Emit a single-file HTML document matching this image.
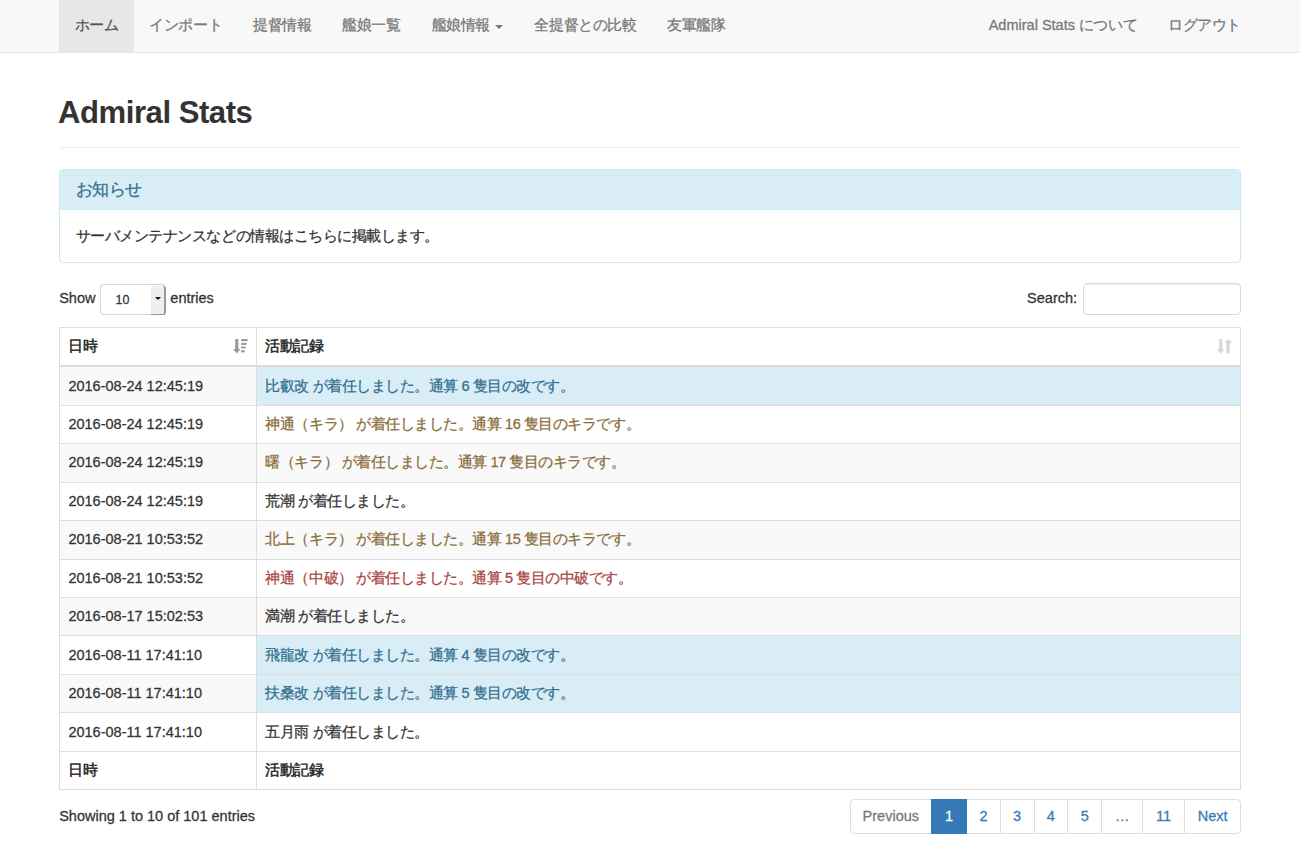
<!DOCTYPE html>
<html><head><meta charset="utf-8">
<style>
html{zoom:1.0366}
*{box-sizing:border-box}
body{-webkit-text-stroke:0.25px;margin:0;font-family:"Liberation Sans",sans-serif;font-size:14px;line-height:20px;color:#333;background:#fff}
.navbar{height:51px;background:#f8f8f8;border-bottom:1px solid #e7e7e7;position:relative}
.container{width:1170px;margin:0 auto;padding:0 15px;position:relative}
.nav{list-style:none;margin:0;padding:0;position:absolute;top:0}
.nav li{float:left}
.nav a{letter-spacing:-0.45px;display:block;padding:14px 15px 16px;line-height:20px;color:#777;text-decoration:none}
.nav li.active a{background:#e7e7e7;color:#555}
.nav.left{left:15px}
.nav.right{right:0}
.caret{position:relative;top:1.2px;display:inline-block;width:0;height:0;margin-left:2px;vertical-align:middle;border-top:4px solid;border-right:4px solid transparent;border-left:4px solid transparent}
.page-header{margin:41.5px 0 20px;padding-bottom:9px;border-bottom:1px solid #eee}
h1{-webkit-text-stroke:0;margin:0 0 7.5px -1px;font-size:30px;line-height:33px;font-weight:bold;letter-spacing:-0.45px}
.jp,.panel{letter-spacing:-0.45px}
.panel{border:1px solid #c8ebf3;border-radius:4px;margin-bottom:20px;box-shadow:0 0 0.6px #d8f0f6}
.panel-heading{background:#d9edf7;color:#31708f;padding:10px 15px;border-bottom:1px solid #d3ecf5;border-radius:3px 3px 0 0}
.panel-title{font-size:16px;line-height:17.6px;position:relative;top:0.8px}
.panel-body{padding:15.8px 15px 14.2px}
.dt-top{height:42px;position:relative}
.dt-len{position:absolute;left:0;top:0.9px}
.dt-filter{position:absolute;right:0;top:0.8px}
.sel{display:inline-block;vertical-align:middle;width:64px;height:29.5px;border:1px solid #d6d6d6;border-radius:4px;font-size:12px;line-height:30px;padding-left:14px;position:relative;top:0;margin:0 0 0 0.5px;background:#fff;box-shadow:0 0 1px rgba(0,0,0,.12)}
.sel b{position:absolute;right:-1px;top:1px;bottom:-1px;width:15px;background:#efefef;border-right:2.3px solid #999;border-bottom:1.6px solid #999;border-radius:0 3px 3px 0}
.sel b:after{content:'';position:absolute;left:4.3px;top:10.6px;border-top:3.5px solid #111;border-left:3.3px solid transparent;border-right:3.3px solid transparent}
.inp{display:inline-block;vertical-align:middle;width:152px;height:30px;border:1px solid #d8d8d8;border-radius:4px;position:relative;top:-0.8px;margin-left:6px;box-shadow:inset 0 1px 1px rgba(0,0,0,.075)}
table{width:100%;border-collapse:collapse;border:1px solid #ddd}
td,th{border:1px solid #ddd;padding:8px;line-height:20px;text-align:left;vertical-align:top}
th{-webkit-text-stroke:0}
thead th{border-bottom:2px solid #ddd;font-weight:bold;position:relative}
tbody td{line-height:20.15px}
tbody tr:nth-child(odd) td{background:#f9f9f9}
tbody td.info{background:#d9edf7 !important}
.ti{color:#31708f}.tw{color:#8a6d3b}.td{color:#a94442}
.dt-bottom{position:relative;height:60px}
.info-text{position:absolute;left:0;top:15.3px}
.pagination{position:absolute;right:0;top:8.75px;display:flex;margin:0;padding:0;list-style:none}
.pagination li a{display:block;padding:6px 0;text-align:center;line-height:20px;color:#337ab7;border:1px solid #ddd;margin-left:-1px;background:#fff;text-decoration:none}
.pagination li:first-child a{border-radius:4px 0 0 4px;margin-left:0;color:#777}
.pagination li:last-child a{border-radius:0 4px 4px 0}
.pagination li a.dis{color:#777}
.pagination li.active a{background:#337ab7;border-color:#337ab7;color:#fff;position:relative;z-index:2}
</style></head>
<body>
<div class="navbar"><div class="container">
<ul class="nav left">
<li class="active"><a>ホーム</a></li><li><a>インポート</a></li><li><a>提督情報</a></li><li><a>艦娘一覧</a></li><li><a>艦娘情報 <span class="caret"></span></a></li><li><a>全提督との比較</a></li><li><a>友軍艦隊</a></li>
</ul>
<ul class="nav right"><li><a><span style="letter-spacing:0">Admiral Stats </span>について</a></li><li><a>ログアウト</a></li></ul>
</div></div>
<div class="container">
<div class="page-header"><h1>Admiral Stats</h1></div>
<div class="panel"><div class="panel-heading"><div class="panel-title">お知らせ</div></div><div class="panel-body">サーバメンテナンスなどの情報はこちらに掲載します。</div></div>
<div class="dt-top">
<div class="dt-len">Show <span class="sel">10<b></b></span> entries</div>
<div class="dt-filter">Search:<span class="inp"></span></div>
</div>
<table>
<thead><tr><th class="jp" style="width:190px">日時</th><th class="jp">活動記録</th></tr></thead>
<tbody>
<tr><td>2016-08-24 12:45:19</td><td class="jp info ti">比叡改 が着任しました。通算 6 隻目の改です。</td></tr>
<tr><td>2016-08-24 12:45:19</td><td class="jp tw">神通（キラ） が着任しました。通算 16 隻目のキラです。</td></tr>
<tr><td>2016-08-24 12:45:19</td><td class="jp tw">曙（キラ） が着任しました。通算 17 隻目のキラです。</td></tr>
<tr><td>2016-08-24 12:45:19</td><td class="jp">荒潮 が着任しました。</td></tr>
<tr><td>2016-08-21 10:53:52</td><td class="jp tw">北上（キラ） が着任しました。通算 15 隻目のキラです。</td></tr>
<tr><td>2016-08-21 10:53:52</td><td class="jp td">神通（中破） が着任しました。通算 5 隻目の中破です。</td></tr>
<tr><td>2016-08-17 15:02:53</td><td class="jp">満潮 が着任しました。</td></tr>
<tr><td>2016-08-11 17:41:10</td><td class="jp info ti">飛龍改 が着任しました。通算 4 隻目の改です。</td></tr>
<tr><td>2016-08-11 17:41:10</td><td class="jp info ti">扶桑改 が着任しました。通算 5 隻目の改です。</td></tr>
<tr><td>2016-08-11 17:41:10</td><td class="jp">五月雨 が着任しました。</td></tr>
</tbody>
<tfoot><tr><th class="jp">日時</th><th class="jp">活動記録</th></tr></tfoot>
</table>
<div class="dt-bottom">
<div class="info-text">Showing 1 to 10 of 101 entries</div>
<ul class="pagination"><li><a style="width:79.3px">Previous</a></li><li class="active"><a style="width:35.05px">1</a></li><li><a style="width:33.3px">2</a></li><li><a style="width:33.7px">3</a></li><li><a style="width:33.4px">4</a></li><li><a style="width:34.1px">5</a></li><li><a style="width:40px" class="dis">…</a></li><li><a style="width:42px">11</a></li><li><a style="width:54.5px">Next</a></li></ul>
</div>
</div>
<div style="position:absolute;left:0;top:0;width:1300px;height:861px;zoom:0.96469;pointer-events:none">
<svg style="position:absolute;left:233px;top:339px" width="16" height="16" viewBox="0 0 16 16"><g fill="#999"><rect x="2.2" y="0.1" width="3.2" height="10.6"/><polygon points="0.1,10 7.4,10 3.8,14.5"/><rect x="8.1" y="0.1" width="6.5" height="2.1"/><rect x="8.1" y="3.9" width="5.6" height="2"/><rect x="8.1" y="7.6" width="4.7" height="1.8"/><rect x="8.1" y="11.2" width="3.6" height="2.2"/></g></svg>
<svg style="position:absolute;left:1216px;top:339px" width="17" height="16" viewBox="0 0 17 16"><g fill="#d6d6d6"><rect x="3.3" y="0.1" width="3" height="10.8"/><polygon points="0.7,10.2 8.3,10.2 4.8,14.8"/><rect x="10.4" y="3.6" width="3.3" height="10.8"/><polygon points="8.7,3.9 16,3.9 12.1,0"/></g></svg>
</div>
</body></html>
